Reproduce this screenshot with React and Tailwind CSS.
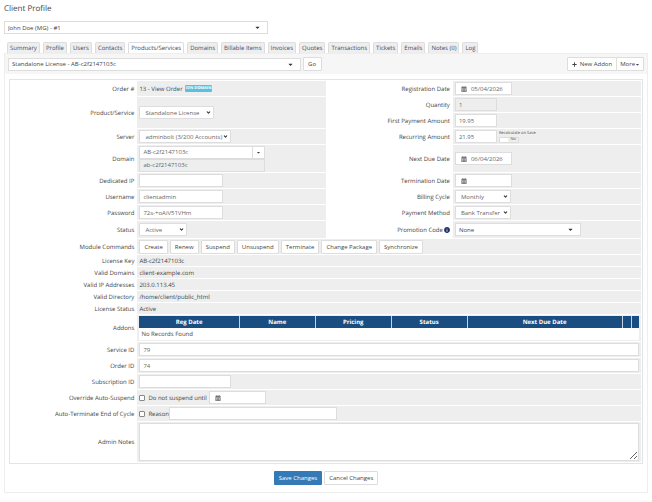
import React, { useState } from "react";
import { FaCalendarAlt, FaCaretDown, FaInfoCircle, FaPlus } from "react-icons/fa";
import { FiChevronDown } from "react-icons/fi";

const tabs = [
  "Summary",
  "Profile",
  "Users",
  "Contacts",
  "Products/Services",
  "Domains",
  "Billable Items",
  "Invoices",
  "Quotes",
  "Transactions",
  "Tickets",
  "Emails",
  "Notes (0)",
  "Log",
];

const commands = [
  "Create",
  "Renew",
  "Suspend",
  "Unsuspend",
  "Terminate",
  "Change Package",
  "Synchronize",
];

const license = [
  ["License Key", "AB-c2f2147103c"],
  ["Valid Domains", "client-example.com"],
  ["Valid IP Addresses", "203.0.113.45"],
  ["Valid Directory", "/home/client/public_html"],
  ["License Status", "Active"],
];

const Label = ({ htmlFor, className = "", children }) => (
  <div className={`flex items-center justify-end pr-0.5 ${className}`}>
    <label htmlFor={htmlFor} className="flex items-center gap-px">
      {children}
    </label>
  </div>
);

const Value = ({ className = "h-[15px]", children }) => (
  <div className={`flex items-center bg-[#eeeeee] px-0.5 ${className}`}>
    {children}
  </div>
);

const TextInput = ({ className = "w-[84px]", ...rest }) => (
  <input
    type="text"
    className={`h-[13px] min-w-0 border border-[#dddddd] px-[3px] text-[#666666] ${className}`}
    {...rest}
  />
);

const DateInput = ({ id, value, label }) => (
  <div className="flex h-[13px] w-[57px] items-center gap-1 border border-[#dddddd] bg-white pl-[5px]">
    <FaCalendarAlt className="h-1.5 w-1.5 shrink-0 text-[#777777]" />
    <input
      id={id}
      type="text"
      aria-label={label}
      defaultValue={value}
      className="w-full min-w-0 text-[#666666]"
    />
  </div>
);

const Select = ({ id, value, className }) => (
  <div className={`relative ${className}`}>
    <select
      id={id}
      className="block h-[13px] w-full appearance-none rounded-[1px] border border-[#dddddd] bg-white pl-[5px] text-[#666666]"
    >
      <option>{value}</option>
    </select>
    <FiChevronDown
      strokeWidth={5}
      className="pointer-events-none absolute top-1 right-[3px] h-[5px] w-[5px] text-[#333333]"
    />
  </div>
);

// searchable drop-down, solid caret further in from the edge
const WideSelect = ({ id, label, value, className }) => (
  <div className={`relative ${className}`}>
    <select
      id={id}
      aria-label={label}
      className="block h-[13px] w-full appearance-none border border-[#dddddd] bg-white pl-[3px]"
    >
      <option>{value}</option>
    </select>
    <FaCaretDown className="pointer-events-none absolute top-[3px] right-[7px] h-[7px] w-[7px] text-[#333333]" />
  </div>
);

const Button = ({ className = "px-1", children }) => (
  <button
    type="button"
    className={`flex h-[14px] cursor-pointer items-center justify-center rounded-[1px] border border-[#dddddd] bg-white ${className}`}
  >
    {children}
  </button>
);

const App = () => {
  const [active, setActive] = useState("Products/Services");
  return (
    <div className="bg-white font-['Open_Sans',sans-serif] text-[6px] leading-[8px] text-[#444444] [text-rendering:geometricPrecision]">
      <main className="px-1 pt-[3px]">
        <h1 className="text-[8px] leading-[12px]">Client Profile</h1>
        <WideSelect
          label="Client"
          value="John Doe (MG) - #1"
          className="mt-1.5 w-[41%]"
        />
        <nav className="mt-2 flex gap-[3px] pl-[3px]">
          {tabs.map((tab) => (
            <a
              key={tab}
              href="#"
              onClick={() => setActive(tab)}
              className={`rounded-t-[2px] border border-b-0 border-[#dddddd] px-0.5 pt-px leading-[9px] whitespace-nowrap ${
                tab === active ? "bg-white" : "bg-[#eeeeee] text-[#3a4a6b]"
              }`}
            >
              {tab}
            </a>
          ))}
        </nav>
        <section className="border border-[#eeeeee]">
          <div className="flex h-5 items-center bg-[#f6f6f6] px-[3px]">
            <WideSelect
              label="Product"
              value="Standalone License - AB-c2f2147103c"
              className="w-[46%]"
            />
            <Button className="ml-0.5 w-[19px]">Go</Button>
            <Button className="ml-auto gap-[3px] px-1">
              <FaPlus className="h-[5px] w-[5px]" /> New Addon
            </Button>
            <Button className="-ml-px px-[3px]">
              More <FaCaretDown className="h-[5px] w-[5px]" />
            </Button>
          </div>
          <form className="mx-1 mt-[5px] mb-[7px]">
            <div className="grid grid-cols-[2fr_3fr_2fr_3fr] gap-px border border-[#dfe6e8] p-px">
              <Label>Order #</Label>
              <Value>
                <span>
                  13 -{" "}
                  <a href="#" className="text-[#3a4a6b]">
                    View Order
                  </a>
                </span>
                <span className="ml-0.5 rounded-[1px] bg-[#5bc0de] px-px text-[4px] leading-[7px] font-bold text-white">
                  IDN DOMAIN
                </span>
              </Value>
              <Label htmlFor="regdate">Registration Date</Label>
              <Value>
                <DateInput id="regdate" value="05/04/2026" />
              </Value>

              <Label htmlFor="product" className="row-span-2">
                Product/Service
              </Label>
              <Value className="row-span-2">
                <Select
                  id="product"
                  value="Standalone License"
                  className="w-[75px]"
                />
              </Value>
              <Label htmlFor="qty">Quantity</Label>
              <Value>
                <TextInput
                  id="qty"
                  defaultValue="1"
                  disabled
                  className="w-[42px] bg-[#eeeeee]"
                />
              </Value>
              <Label htmlFor="first">First Payment Amount</Label>
              <Value>
                <TextInput
                  id="first"
                  defaultValue="19.95"
                  className="w-[42px] bg-white"
                />
              </Value>

              <Label htmlFor="server">Server</Label>
              <Value>
                <Select
                  id="server"
                  value="adminbolt (3/200 Accounts)"
                  className="w-[92px]"
                />
              </Value>
              <Label htmlFor="recurring">Recurring Amount</Label>
              <Value>
                <TextInput
                  id="recurring"
                  defaultValue="21.95"
                  className="w-[42px] bg-white"
                />
                <label className="ml-0.5 text-[4px] leading-[6px]">
                  Recalculate on Save
                  <input type="checkbox" className="sr-only" />
                  <span className="flex w-5 border border-[#dddddd] bg-white leading-[4px]">
                    <span className="ml-auto bg-[#eeeeee] px-0.5">No</span>
                  </span>
                </label>
              </Value>

              <Label htmlFor="domain">Domain</Label>
              <Value className="h-[27px]">
                <div className="w-[126px]">
                  <div className="flex">
                    <TextInput
                      id="domain"
                      defaultValue="AB-c2f2147103c"
                      className="flex-1 bg-white"
                    />
                    <button
                      type="button"
                      aria-label="Domain options"
                      className="-ml-px flex h-[13px] w-[13px] items-center justify-center border border-[#dddddd] bg-white"
                    >
                      <FaCaretDown className="h-[5px] w-[5px]" />
                    </button>
                  </div>
                  <TextInput
                    aria-label="Domain name"
                    defaultValue="ab-c2f2147103c"
                    disabled
                    className="block w-full bg-[#eeeeee]"
                  />
                </div>
              </Value>
              <Label htmlFor="nextdue">Next Due Date</Label>
              <Value className="h-[27px]">
                <DateInput id="nextdue" value="06/04/2026" />
              </Value>

              <Label htmlFor="ip">Dedicated IP</Label>
              <Value>
                <TextInput id="ip" className="w-[84px] bg-white" />
              </Value>
              <Label htmlFor="termdate">Termination Date</Label>
              <Value>
                <DateInput id="termdate" />
              </Value>

              <Label htmlFor="username">Username</Label>
              <Value>
                <TextInput
                  id="username"
                  defaultValue="clientadmin"
                  className="w-[84px] bg-white"
                />
              </Value>
              <Label htmlFor="cycle">Billing Cycle</Label>
              <Value>
                <Select id="cycle" value="Monthly" className="w-[56px]" />
              </Value>

              <Label htmlFor="password">Password</Label>
              <Value>
                <TextInput
                  id="password"
                  defaultValue="72s-+oAiV51VHm"
                  className="w-[84px] bg-white"
                />
              </Value>
              <Label htmlFor="method">Payment Method</Label>
              <Value>
                <Select
                  id="method"
                  value="Bank Transfer"
                  className="w-[56px]"
                />
              </Value>

              <Label htmlFor="status">Status</Label>
              <Value className="h-[17px]">
                <Select id="status" value="Active" className="w-[48px]" />
              </Value>
              <Label htmlFor="promo">
                Promotion Code
                <FaInfoCircle className="h-1.5 w-1.5 text-[#1c2f66]" />
              </Label>
              <Value className="h-[17px]">
                <WideSelect id="promo" value="None" className="w-[126px]" />
              </Value>

              <Label>Module Commands</Label>
              <Value className="col-span-3 h-[15px] gap-0.5">
                {commands.map((command) => (
                  <Button key={command}>{command}</Button>
                ))}
              </Value>

              {license.map(([name, value]) => (
                <React.Fragment key={name}>
                  <Label>{name}</Label>
                  <Value className="col-span-3 h-[11px]">{value}</Value>
                </React.Fragment>
              ))}

              <Label>Addons</Label>
              <Value className="col-span-3 h-[26px]">
                <table className="w-full table-fixed bg-white">
                  <thead>
                    <tr className="h-3 divide-x divide-[#c5d3e0] bg-[#1a4d80] text-white">
                      <th className="w-[20%]">Reg Date</th>
                      <th>Name</th>
                      <th>Pricing</th>
                      <th>Status</th>
                      <th className="w-[31%]">Next Due Date</th>
                      <th className="w-[9px]"></th>
                      <th className="w-[8px]"></th>
                    </tr>
                  </thead>
                  <tbody>
                    <tr className="h-3">
                      <td colSpan={7} className="px-0.5">
                        No Records Found
                      </td>
                    </tr>
                  </tbody>
                </table>
              </Value>

              <Label htmlFor="serviceid">Service ID</Label>
              <Value className="col-span-3 h-[15px]">
                <TextInput
                  id="serviceid"
                  defaultValue="79"
                  className="w-full bg-white"
                />
              </Value>
              <Label htmlFor="orderid">Order ID</Label>
              <Value className="col-span-3 h-[15px]">
                <TextInput
                  id="orderid"
                  defaultValue="74"
                  className="w-full bg-white"
                />
              </Value>
              <Label htmlFor="subid">Subscription ID</Label>
              <Value className="col-span-3 h-[15px]">
                <TextInput id="subid" className="w-[92px] bg-white" />
              </Value>

              <Label>Override Auto-Suspend</Label>
              <Value className="col-span-3 h-[15px]">
                <label className="mr-0.5 flex items-center gap-[3px]">
                  <input
                    type="checkbox"
                    className="h-1.5 w-1.5 appearance-none rounded-[1px] border border-[#888888] bg-white checked:bg-[#337ab7]"
                  />
                  Do not suspend until
                </label>
                <DateInput label="Suspend date" />
              </Value>
              <Label>Auto-Terminate End of Cycle</Label>
              <Value className="col-span-3 h-[15px]">
                <label className="flex items-center gap-[3px]">
                  <input
                    type="checkbox"
                    className="h-1.5 w-1.5 appearance-none rounded-[1px] border border-[#888888] bg-white checked:bg-[#337ab7]"
                  />
                  Reason
                </label>
                <TextInput aria-label="Reason" className="w-[168px] bg-white" />
              </Value>

              <Label htmlFor="notes">Admin Notes</Label>
              <Value className="col-span-3 h-[40px]">
                <textarea
                  id="notes"
                  className="h-[38px] w-full border border-[#dddddd] bg-white px-[3px]"
                />
              </Value>
            </div>
            <div className="mt-[7px] flex justify-center gap-0.5">
              <button
                type="button"
                className="h-[14px] cursor-pointer rounded-[1px] bg-[#337ab7] px-[5px] text-white"
              >
                Save Changes
              </button>
              <Button>Cancel Changes</Button>
            </div>
          </form>
        </section>
      </main>
      <footer className="mt-[7px] h-0.5 bg-[#fafafa]"></footer>
    </div>
  );
};

export default App;
